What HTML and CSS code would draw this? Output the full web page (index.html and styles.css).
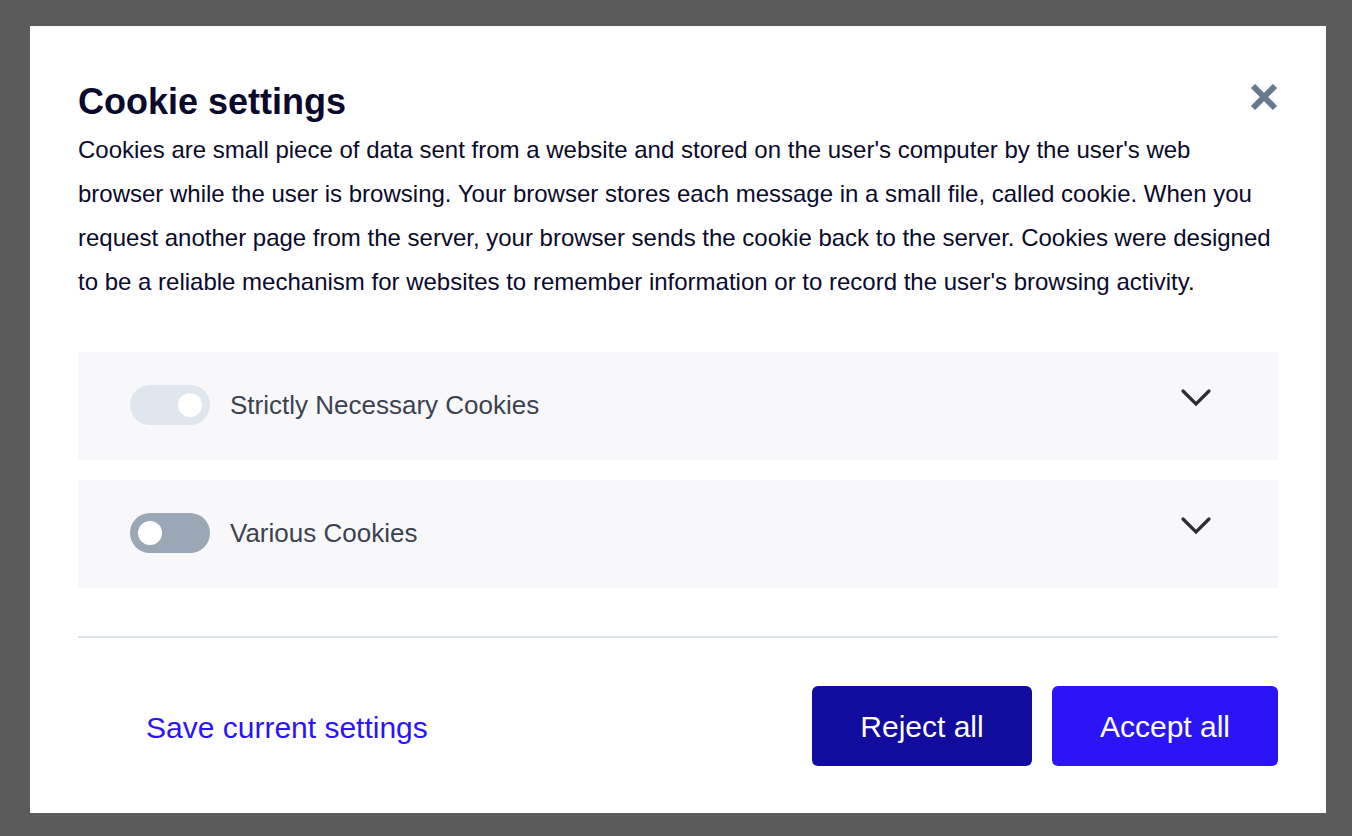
FILE: index.html
```html
<!DOCTYPE html>
<html lang="en">
<head>
<meta charset="utf-8">
<title>Cookie settings</title>
<link rel="stylesheet" href="styles.css">
</head>
<body>
<div class="overlay">
  <div class="modal" role="dialog" aria-labelledby="cs-title">
    <div class="modal-head">
      <h2 id="cs-title" class="title">Cookie settings</h2>
      <button class="close" aria-label="Close">
        <svg width="30" height="30" viewBox="0 0 30 30"><path d="M4 4 L26 26 M26 4 L4 26" stroke="#687891" stroke-width="6" stroke-linecap="butt"/></svg>
      </button>
    </div>
    <p class="desc">Cookies are small piece of data sent from a website and stored on the user's computer by the user's web<br>browser while the user is browsing. Your browser stores each message in a small file, called cookie. When you<br>request another page from the server, your browser sends the cookie back to the server. Cookies were designed<br>to be a reliable mechanism for websites to remember information or to record the user's browsing activity.</p>

    <div class="sections">
      <div class="section">
        <div class="section-row">
          <span class="toggle toggle-on-disabled"><span class="knob"></span></span>
          <span class="label">Strictly Necessary Cookies</span>
          <svg class="chev" width="32" height="20" viewBox="0 0 32 20"><path d="M3 3 L16 16 L29 3" fill="none" stroke="#2b2d33" stroke-width="3.2" stroke-linecap="round" stroke-linejoin="miter"/></svg>
        </div>
      </div>
      <div class="section">
        <div class="section-row">
          <span class="toggle toggle-off"><span class="knob"></span></span>
          <span class="label">Various Cookies</span>
          <svg class="chev" width="32" height="20" viewBox="0 0 32 20"><path d="M3 3 L16 16 L29 3" fill="none" stroke="#2b2d33" stroke-width="3.2" stroke-linecap="round" stroke-linejoin="miter"/></svg>
        </div>
      </div>
    </div>

    <div class="footer">
      <button class="link-btn">Save current settings</button>
      <div class="actions">
        <button class="btn btn-reject">Reject all</button>
        <button class="btn btn-accept">Accept all</button>
      </div>
    </div>
  </div>
</div>
</body>
</html>
```

FILE: styles.css
```css
* { box-sizing: border-box; }
html, body { margin: 0; padding: 0; }
body {
  background: #5b5b5b;
  font-family: "Liberation Sans", Arial, Helvetica, sans-serif;
  width: 1352px;
  height: 836px;
  overflow: hidden;
}
.overlay {
  padding: 26px 0 0 30px;
}
.modal {
  width: 1296px;
  height: 787px;
  background: #ffffff;
  padding: 54px 48px 48px 48px;
  display: flex;
  flex-direction: column;
}
.modal-head {
  display: flex;
  justify-content: space-between;
  align-items: flex-start;
}
.title {
  margin: 0;
  font-size: 36px;
  line-height: 43px;
  font-weight: 700;
  color: #0a0a2c;
}
.close {
  background: none;
  border: 0;
  padding: 0;
  margin-top: 2px;
  margin-right: -1px;
  width: 30px;
  height: 30px;
  cursor: pointer;
}
.close svg { display: block; }
.desc {
  margin: 5px 0 0 0;
  font-size: 24px;
  line-height: 44px;
  white-space: nowrap;
  color: #0a0a2c;
}
.sections {
  margin-top: 48px;
  display: flex;
  flex-direction: column;
  gap: 20px;
}
.section {
  background: #f8f8fa;
  height: 108px;
  padding: 0 66px 0 52px;
  display: flex;
  align-items: center;
}
.section-row {
  display: flex;
  align-items: center;
  width: 100%;
  gap: 20px;
  margin-top: -2px;
}
.toggle {
  position: relative;
  width: 80px;
  height: 40px;
  border-radius: 20px;
  flex: none;
}
.knob {
  position: absolute;
  top: 8px;
  width: 24px;
  height: 24px;
  border-radius: 50%;
  background: #ffffff;
}
.toggle-on-disabled { background: #dfe6ee; }
.toggle-on-disabled .knob { right: 8px; }
.toggle-off { background: #9aa7b5; }
.toggle-off .knob { left: 8px; }
.label {
  font-size: 26px;
  color: #3b4350;
  flex: 1;
}
.chev {
  flex: none;
  margin-top: -14px;
}
.footer {
  margin-top: 48px;
  border-top: 2px solid #dbe5ee;
  padding-top: 48px;
  display: flex;
  align-items: center;
  justify-content: space-between;
}
.link-btn {
  background: none;
  border: 0;
  padding: 4px 0 0 68px;
  font-family: inherit;
  font-size: 30px;
  color: #2b15f7;
  white-space: nowrap;
  cursor: pointer;
}
.actions {
  display: flex;
  gap: 20px;
}
.btn {
  height: 80px;
  border: 0;
  border-radius: 6px;
  padding: 2px 0 0 0;
  font-family: inherit;
  font-size: 30px;
  color: #ffffff;
  white-space: nowrap;
  cursor: pointer;
}
.btn-reject { background: #110b9e; width: 220px; }
.btn-accept { background: #2b15f7; width: 226px; }
```
